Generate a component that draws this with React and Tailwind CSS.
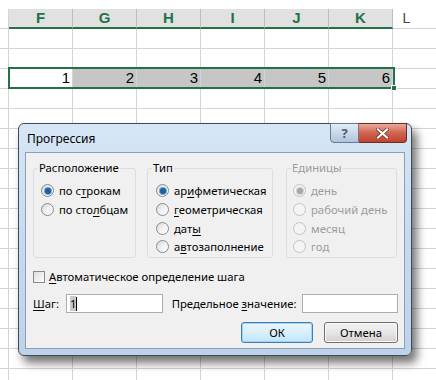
import React from 'react'

const cols = ['F', 'G', 'H', 'I', 'J', 'K']

const Radio = ({ checked, disabled }) => (
  <span
    className={`relative inline-block w-[13px] h-[13px] shrink-0 rounded-full border ${
      disabled ? 'border-[#c2c2c2] bg-[#f4f4f4]' : 'border-[#8a8a8a] bg-gradient-to-br from-[#d6d6d6] via-[#f2f2f2] to-[#ffffff]'
    }`}
  >
    {checked && (
      <span
        className={`absolute left-[2.5px] top-[2.5px] w-[6px] h-[6px] rounded-full ${
          disabled ? 'bg-[#a8a8a8] shadow-[0_0_0_1px_#d0d0d0]' : 'bg-[#1f5f9e] shadow-[0_0_0_1px_#6fa6d8]'
        }`}
      ></span>
    )}
  </span>
)

const U = ({ children }) => <span className="underline underline-offset-[2px] decoration-1">{children}</span>

const Option = ({ checked, disabled, children }) => (
  <div className="h-[18.7px] flex items-center gap-[5px] whitespace-nowrap">
    <Radio checked={checked} disabled={disabled} />
    <span className={disabled ? 'text-[#9c9c9c]' : 'text-black'}>{children}</span>
  </div>
)

const Group = ({ title, width, pl, children, disabled }) => (
  <div className={`relative ${width} h-[90px] border border-[#d5dfe5] rounded-[3px] ${pl} pt-[12.5px]`}>
    <span className={`absolute left-[4px] -top-[9px] px-[1px] bg-[#f0f0f0] leading-[16px] ${disabled ? 'text-[#9c9c9c]' : 'text-black'}`}>
      {title}
    </span>
    {children}
  </div>
)

const App = () => {
  return (
    <div className="relative w-[436px] h-[380px] bg-white overflow-hidden font-['Noto_Sans',sans-serif]">
      {/* sheet */}
      <div className="h-[9px] bg-white"></div>
      <div className="flex h-[20px] bg-white">
        <div className="w-[9px] border-r border-b border-[#d4d4d4] bg-white"></div>
        {cols.map((c) => (
          <div
            key={c}
            className="w-[64px] border-r border-b-2 border-r-[#bdbdbd] border-b-[#217346] bg-[#e1e1e1] flex items-center justify-center text-[15px] font-bold text-[#217346] font-['Liberation_Sans',sans-serif]"
          >
            {c}
          </div>
        ))}
        <div className="flex-1 flex items-center justify-center border-b border-[#d4d4d4] text-[14px] text-[#444] font-['Liberation_Sans',sans-serif] pr-[16px]">
          L
        </div>
      </div>
      {Array.from({ length: 18 }).map((_, r) => (
        <div key={r} className="flex h-[20px] border-b border-[#d4d4d4] font-['Liberation_Sans',sans-serif] text-[15px]">
          <div className="w-[9px] border-r border-[#d4d4d4]"></div>
          {cols.map((c, i) => (
            <div
              key={c}
              className={`w-[64px] border-r border-[#d4d4d4] flex items-center justify-end pr-[2px] ${
                r === 2 && i > 0 ? 'bg-[#c6c6c6]' : ''
              }`}
            >
              {r === 2 ? i + 1 : ''}
            </div>
          ))}
          <div className="flex-1"></div>
        </div>
      ))}

      {/* selection border */}
      <div className="absolute left-[8px] top-[67px] w-[387px] h-[22px] border-2 border-[#217346]"></div>
      <div className="absolute left-[391px] top-[85px] w-[6px] h-[6px] bg-[#217346] border border-white"></div>

      {/* dialog */}
      <div className="absolute left-[18px] top-[123px] w-[394px] h-[233px] rounded-[6px] border border-[#3f4a57] bg-gradient-to-b from-[#d6e6f6] via-[#c6daef] to-[#bed3ea] shadow-[5px_7px_10px_rgba(0,0,0,0.55)] text-[11.3px] leading-none">
        <div className="absolute left-[8px] top-[9px] text-black text-[12px]">Прогрессия</div>
        <div className="absolute left-[311px] -top-px flex h-[20px]">
          <div className="w-[29px] h-full border border-[#6a7a8e] rounded-bl-[4px] bg-gradient-to-b from-[#e3ecf6] via-[#c9d8e9] to-[#b0c4da] flex items-center justify-center text-[13px] font-bold text-[#4c5a6c]">
            ?
          </div>
          <div className="w-[48px] h-full border border-l-0 border-[#6b2d26] rounded-br-[4px] bg-gradient-to-b from-[#e9a99b] via-[#d0634f] to-[#c2432f] flex items-center justify-center">
            <svg width="13" height="11" viewBox="0 0 13 11">
              <path d="M2 1.5 L11 9.5 M11 1.5 L2 9.5" stroke="#6b2d26" strokeWidth="3.6" strokeLinecap="square" />
              <path d="M2 1.5 L11 9.5 M11 1.5 L2 9.5" stroke="#ffffff" strokeWidth="2.2" strokeLinecap="square" />
            </svg>
          </div>
        </div>

        <div className="absolute left-[6px] top-[28px] right-[6px] bottom-[6px] border border-[#8ba0b8] bg-[#f0f0f0] flex flex-col pt-[15px] pl-[7px] pr-[6px]">
          <div className="flex">
            <Group title="Расположение" width="w-[103px]" pl="pl-[7px]">
              <Option checked>
                по с<U>т</U>рокам
              </Option>
              <Option>
                по сто<U>л</U>бцам
              </Option>
            </Group>
            <div className="w-[11px]"></div>
            <Group title="Тип" width="w-[126px]" pl="pl-[8px]">
              <Option checked>
                ар<U>и</U>фметическая
              </Option>
              <Option>
                <U>г</U>еометрическая
              </Option>
              <Option>
                дат<U>ы</U>
              </Option>
              <Option>
                а<U>в</U>тозаполнение
              </Option>
            </Group>
            <div className="w-[13px]"></div>
            <Group title="Единицы" width="w-[111px]" pl="pl-[6px]" disabled>
              <Option checked disabled>
                день
              </Option>
              <Option disabled>рабочий день</Option>
              <Option disabled>месяц</Option>
              <Option disabled>год</Option>
            </Group>
          </div>

          <div className="mt-[13px] h-[12px] flex items-center gap-[4px] whitespace-nowrap">
            <span className="w-[12px] h-[12px] border border-[#8a8a8a] bg-gradient-to-br from-[#dcdcdc] to-[#ffffff]"></span>
            <span>
              <U>А</U>втоматическое определение шага
            </span>
          </div>

          <div className="mt-[11px] h-[19px] flex items-center whitespace-nowrap">
            <span className="w-[33px]">
              <U>Ш</U>аг:
            </span>
            <div className="w-[97px] h-[19px] border border-[#abadb3] bg-white flex items-center pl-[3px]">
              <span className="bg-[#c9c9c9] leading-[15px]">1</span>
              <span className="w-px h-[14px] bg-black"></span>
            </div>
            <span className="ml-[9px] w-[131px]">
              Предельное <U>з</U>начение:
            </span>
            <div className="w-[96px] h-[19px] border border-[#abadb3] bg-white"></div>
          </div>

          <div className="mt-[9px] flex justify-end gap-[11px]">
            <button className="w-[72px] h-[21px] rounded-[3px] border border-[#3c7fb1] shadow-[inset_0_0_0_1px_#a6d2f0] bg-gradient-to-b from-[#eaf6fd] via-[#d9eefa] to-[#bee6fd] text-black text-[11.3px]">
              ОК
            </button>
            <button className="w-[74px] h-[21px] rounded-[3px] border border-[#707070] shadow-[inset_0_0_0_1px_#fafafa] bg-gradient-to-b from-[#f2f2f2] via-[#e6e6e6] to-[#d0d0d0] text-black text-[11.3px]">
              Отмена
            </button>
          </div>
        </div>
      </div>
    </div>
  )
}

export default App
